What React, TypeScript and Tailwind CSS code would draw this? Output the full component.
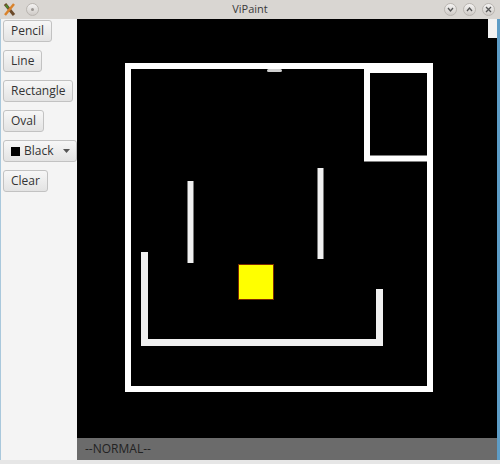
const font = { fontFamily: '"Open Sans", "Noto Sans", sans-serif' };

function CircleBtn({ children }: { children?: React.ReactNode }) {
  return (
    <div className="flex h-[13px] w-[13px] items-center justify-center rounded-full border border-[#b9b5b0] bg-gradient-to-b from-[#f4f3f2] to-[#cfcbc7]">
      {children}
    </div>
  );
}

function ToolButton({ label }: { label: string }) {
  return (
    <button className="flex h-[22px] items-center rounded-[3px] border border-[#c2c2c2] bg-gradient-to-b from-[#f7f7f7] to-[#e3e3e3] px-[7px] text-[12px] leading-none text-[#333]">
      {label}
    </button>
  );
}

export default function App() {
  return (
    <div className="flex h-[464px] w-[500px] flex-col overflow-hidden bg-[#e6e6e6]" style={font}>
      {/* title bar */}
      <div className="relative flex h-[19px] items-center bg-[#d9d6d2] px-[3px]">
        <svg width="13" height="13" viewBox="0 0 13 13">
          <path d="M2 1 L11 12" stroke="#6b4a2a" strokeWidth="3" />
          <path d="M11 1 L2 12" stroke="#d9822b" strokeWidth="2.5" />
          <path d="M3 2 L5 5" stroke="#4a8a2a" strokeWidth="2" />
        </svg>
        <div className="ml-[10px]">
          <CircleBtn>
            <div className="h-[3px] w-[3px] rounded-full bg-[#9a9692]" />
          </CircleBtn>
        </div>
        <div className="absolute inset-0 flex items-center justify-center text-[11px] text-[#3a3a3a]">ViPaint</div>
        <div className="ml-auto mr-[2px] flex items-center gap-[6px]">
          <CircleBtn>
            <svg width="7" height="7" viewBox="0 0 7 7">
              <path d="M1 2 L3.5 5 L6 2" stroke="#555" strokeWidth="1.3" fill="none" />
            </svg>
          </CircleBtn>
          <CircleBtn>
            <svg width="7" height="7" viewBox="0 0 7 7">
              <path d="M1 5 L3.5 2 L6 5" stroke="#555" strokeWidth="1.3" fill="none" />
            </svg>
          </CircleBtn>
          <CircleBtn>
            <svg width="7" height="7" viewBox="0 0 7 7">
              <path d="M1 1 L6 6 M6 1 L1 6" stroke="#555" strokeWidth="1.3" fill="none" />
            </svg>
          </CircleBtn>
        </div>
      </div>

      {/* body */}
      <div className="flex h-[441px]">
        <div className="flex w-[77px] flex-col items-start gap-[8px] border-l border-[#a9c8dc] bg-[#f4f4f4] pl-[2px] pt-[1px]">
          <ToolButton label="Pencil" />
          <ToolButton label="Line" />
          <ToolButton label="Rectangle" />
          <ToolButton label="Oval" />
          <button className="flex h-[22px] w-[74px] items-center rounded-[3px] border border-[#c2c2c2] bg-gradient-to-b from-[#f7f7f7] to-[#e3e3e3] pl-[7px] pr-[6px] text-[12px] leading-none text-[#333]">
            <span className="mr-[4px] h-[9px] w-[9px] bg-black" />
            Black
            <svg className="ml-auto" width="7" height="4" viewBox="0 0 7 4">
              <path d="M0 0 L7 0 L3.5 4 Z" fill="#555" />
            </svg>
          </button>
          <ToolButton label="Clear" />
        </div>

        <div className="flex w-[420px] flex-col">
          <div className="relative h-[419px] bg-black">
            <svg className="absolute left-0 top-0" width="420" height="419" viewBox="0 0 420 419">
              <rect x="51" y="47" width="302" height="323" fill="none" stroke="#ffffff" strokeWidth="6" />
              <rect x="290" y="51" width="63" height="88.5" fill="none" stroke="#ffffff" strokeWidth="6" />
              <rect x="190" y="50" width="15" height="3" rx="1.5" fill="#cfcfcf" />
              <line x1="113.5" y1="162" x2="113.5" y2="244" stroke="#f0f0f0" strokeWidth="6" />
              <line x1="243.5" y1="149" x2="243.5" y2="240" stroke="#f0f0f0" strokeWidth="6" />
              <polyline points="67.5,233 67.5,323.5 302.5,323.5 302.5,270" fill="none" stroke="#f0f0f0" strokeWidth="7" />
              <rect x="161.5" y="245.5" width="35" height="35" fill="#ffff00" stroke="#7a2a00" strokeWidth="1" />
            </svg>
            <div className="absolute right-0 top-0 h-[19px] w-[9px] bg-[#f2f2f2]" />
          </div>
          <div className="flex h-[22px] items-center bg-[#6b6b6b] pl-[8px] text-[12px] text-[#222]">--NORMAL--</div>
        </div>

        <div className="w-[3px] bg-[#5d9cc6]" />
      </div>
    </div>
  );
}
